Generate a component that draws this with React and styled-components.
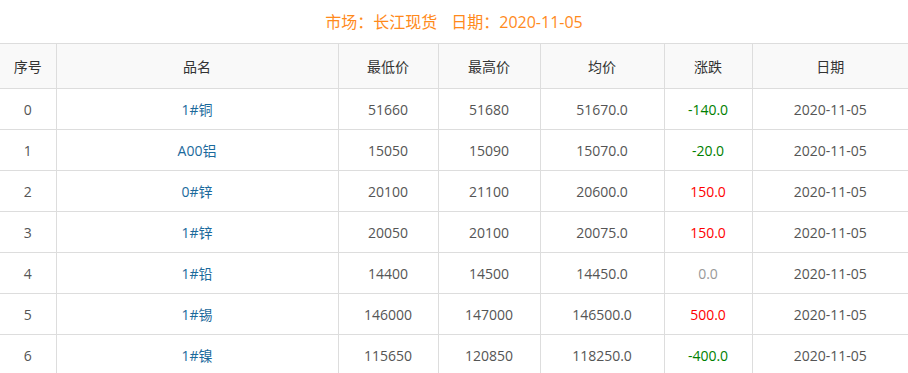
import styled, { createGlobalStyle } from "styled-components";

const GlobalStyle = createGlobalStyle`
  body {
    margin: 0;
    background: #fff;
    font-family: "Open Sans", "Noto Sans CJK SC", sans-serif;
  }
`;

const Wrap = styled.div`
  width: 908px;
`;

const Title = styled.h2`
  margin: 0;
  height: 43px;
  line-height: 44px;
  text-align: center;
  font-size: 16px;
  font-weight: 400;
  color: #ff8a1c;

  span {
    margin-left: 14px;
  }
`;

const Table = styled.table`
  width: 100%;
  border-collapse: collapse;
  table-layout: fixed;
  font-size: 14px;
`;

const Th = styled.th`
  height: 44px;
  padding: 0;
  font-weight: 400;
  color: #333;
  background: #f9f9f9;
  border-top: 1px solid #ddd;
  border-bottom: 1px solid #ddd;
  border-left: 1px solid #ddd;
  text-align: center;

  &:first-child {
    border-left: none;
  }
`;

const Td = styled.td`
  height: 40px;
  padding: 0;
  text-align: center;
  color: ${(p) => p.$color || "#555"};
  border-bottom: 1px solid #ddd;
  border-left: 1px solid #ddd;

  &:first-child {
    border-left: none;
  }
`;

const cols = [56, 282, 100, 102, 124, 88, 156];
const heads = ["序号", "品名", "最低价", "最高价", "均价", "涨跌", "日期"];

const rows = [
  ["1#铜", 51660, 51680, "51670.0", "-140.0"],
  ["A00铝", 15050, 15090, "15070.0", "-20.0"],
  ["0#锌", 20100, 21100, "20600.0", "150.0"],
  ["1#锌", 20050, 20100, "20075.0", "150.0"],
  ["1#铅", 14400, 14500, "14450.0", "0.0"],
  ["1#锡", 146000, 147000, "146500.0", "500.0"],
  ["1#镍", 115650, 120850, "118250.0", "-400.0"],
];

const changeColor = (v) => {
  const n = parseFloat(v);
  if (n > 0) return "#ff0000";
  if (n < 0) return "#008000";
  return "#999";
};

export default function App() {
  return (
    <Wrap>
      <GlobalStyle />
      <Title>
        市场：长江现货<span>日期：2020-11-05</span>
      </Title>
      <Table>
        <colgroup>
          {cols.map((w, i) => (
            <col key={i} style={{ width: w }} />
          ))}
        </colgroup>
        <thead>
          <tr>
            {heads.map((h) => (
              <Th key={h}>{h}</Th>
            ))}
          </tr>
        </thead>
        <tbody>
          {rows.map((r, i) => (
            <tr key={i}>
              <Td>{i}</Td>
              <Td $color="#1b6a9c">{r[0]}</Td>
              <Td>{r[1]}</Td>
              <Td>{r[2]}</Td>
              <Td>{r[3]}</Td>
              <Td $color={changeColor(r[4])}>{r[4]}</Td>
              <Td>2020-11-05</Td>
            </tr>
          ))}
        </tbody>
      </Table>
    </Wrap>
  );
}
